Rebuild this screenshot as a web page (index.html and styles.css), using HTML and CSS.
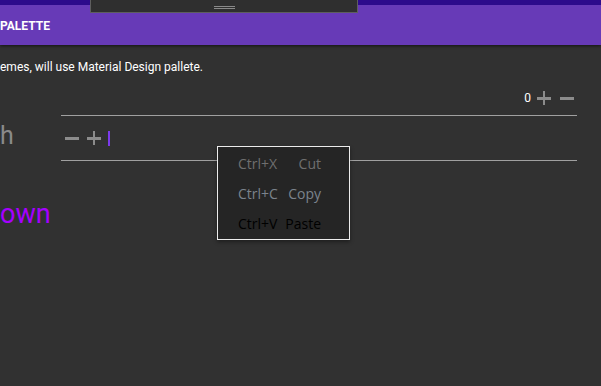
FILE: index.html
```html
<!DOCTYPE html>
<html>
<head>
    <meta charset="UTF-8">
    <title>Palette</title>
    <link rel="stylesheet" href="styles.css">
</head>
<body>
<div id="app">
    <header class="bar">
        <span class="bar-title">PALETTE</span>
    </header>
    <div class="drawer"><span class="grip"></span></div>

    <p class="note">emes, will use Material Design pallete.</p>

    <div class="counter">
        <span class="count">0</span>
        <span class="btn plus"></span>
        <span class="btn minus"></span>
    </div>

    <div class="row">
        <span class="label">h</span>
        <div class="field">
            <span class="btn minus"></span>
            <span class="btn plus"></span>
            <span class="caret"></span>
        </div>
    </div>

    <div class="link">own</div>

    <ul class="menu">
        <li class="cut"><span>Ctrl+X</span><span>Cut</span></li>
        <li class="copy"><span>Ctrl+C</span><span>Copy</span></li>
        <li class="paste"><span>Ctrl+V</span><span>Paste</span></li>
    </ul>
</div>
</body>
</html>
```

FILE: styles.css
```css
html,body{
    width: 100%;
    height: 100%;
    margin: 0;
}
body{
    background: #313131;
    font-family: Roboto, "Noto Sans", sans-serif;
    overflow: hidden;
}
ul,li{
    margin: 0;
    padding: 0;
    list-style: none;
}
p{
    margin: 0;
}
#app{
    position: relative;
    height: 100%;
}
.bar{
    height: 40px;
    border-top: 5px solid #2d0b8b;
    background: #673ab7;
    box-shadow: 0 1px 3px rgba(0,0,0,.6);
    display: flex;
    align-items: center;
}
.bar-title{
    color: #fff;
    font-size: 12px;
    font-weight: bold;
    margin-top: 1px;
}
.drawer{
    position: absolute;
    left: 90px;
    top: 0;
    width: 266px;
    height: 12px;
    background: #2f2f2f;
    border: 1px solid #5e5e5e;
    border-top: none;
    display: flex;
    justify-content: center;
}
.grip{
    width: 21px;
    height: 1px;
    margin-top: 6px;
    border-top: 1px solid #8a8a8a;
    border-bottom: 1px solid #8a8a8a;
}
.note{
    color: #fff;
    font-size: 12px;
    line-height: 14px;
    padding-top: 15px;
}
.counter{
    width: 574px;
    display: flex;
    justify-content: flex-end;
    align-items: center;
    gap: 9px;
    margin-top: 16px;
    height: 16px;
}
.count{
    color: #fff;
    font-size: 12px;
    margin-right: -3px;
}
.btn{
    position: relative;
    width: 14px;
    height: 14px;
}
.btn:before,
.plus:after{
    content: "";
    position: absolute;
    background: #8c8c8c;
    left: 0;
    top: 6px;
    width: 14px;
    height: 3px;
}
.plus:after{
    left: 6px;
    top: 0;
    width: 2px;
    height: 14px;
}
.row{
    display: flex;
    margin-top: 9px;
}
.label{
    width: 61px;
    color: #8a8a8a;
    font-size: 25px;
    line-height: 30px;
    margin-top: 6px;
}
.field{
    width: 516px;
    height: 46px;
    border-top: 1px solid #a0a0a0;
    border-bottom: 1px solid #a0a0a0;
    display: flex;
    align-items: center;
    gap: 8px;
    padding-left: 4px;
    box-sizing: border-box;
}
.caret{
    width: 2px;
    height: 15px;
    background: #7c3aed;
    margin-left: -1px;
}
.link{
    color: #a600ff;
    font-size: 27px;
    line-height: 30px;
    margin-top: 38px;
}
.menu{
    position: absolute;
    left: 217px;
    top: 146px;
    width: 131px;
    height: 91px;
    padding-top: 1px;
    background: #252525;
    border: 1px solid #ececec;
    box-shadow: 0 2px 4px rgba(0,0,0,.4);
    font-family: "Open Sans", "Noto Sans", sans-serif;
    font-size: 14px;
    box-sizing: content-box;
}
.menu li{
    height: 30px;
    display: flex;
    justify-content: space-between;
    align-items: center;
    padding: 0 28px 0 20px;
}
.cut{
    color: #6f6f6f;
}
.copy{
    color: #7b838c;
}
.paste{
    color: #000;
}
```
